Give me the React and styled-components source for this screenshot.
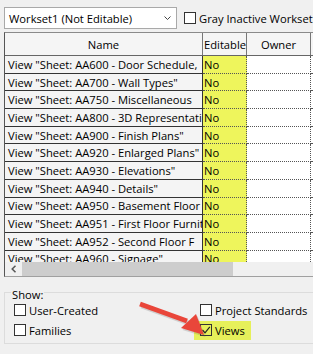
import React from 'react'
import styled, { createGlobalStyle } from 'styled-components'

const names = [
  'View "Sheet: AA600 - Door Schedule,',
  'View "Sheet: AA700 - Wall Types"',
  'View "Sheet: AA750 - Miscellaneous',
  'View "Sheet: AA800 - 3D Representations"',
  'View "Sheet: AA900 - Finish Plans"',
  'View "Sheet: AA920 - Enlarged Plans"',
  'View "Sheet: AA930 - Elevations"',
  'View "Sheet: AA940 - Details"',
  'View "Sheet: AA950 - Basement Floor Furniture"',
  'View "Sheet: AA951 - First Floor Furniture"',
  'View "Sheet: AA952 - Second Floor F',
  'View "Sheet: AA960 - Signage"',
]

const GlobalStyle = createGlobalStyle`
  html, body {
    margin: 0;
    padding: 0;
    background: #f0f0f0;
  }
  body {
    font-family: "Open Sans", "Noto Sans", sans-serif;
    font-size: 11.2px;
    color: #000;
  }
`

const Page = styled.div`
  position: relative;
  width: 313px;
  height: 354px;
  overflow: hidden;
  background: #f0f0f0;
`

const TopBar = styled.div`
  display: flex;
  align-items: center;
  gap: 7px;
  padding: 7px 0 0 4px;
  white-space: nowrap;
`

const Combo = styled.div`
  box-sizing: border-box;
  flex: none;
  display: flex;
  align-items: center;
  justify-content: space-between;
  width: 173px;
  height: 22px;
  padding: 0 5px 0 4px;
  background: #fff;
  border: 1px solid #a9a9a9;
`

const CheckLabel = styled.label`
  flex: none;
  display: flex;
  align-items: center;
  gap: 3px;
  white-space: nowrap;
  height: 19px;
  padding: ${p => (p.$highlight ? '0 6px' : '0')};
  margin-left: ${p => (p.$highlight ? '-6px' : '0')};
  background: ${p => (p.$highlight ? '#e6f05a' : 'transparent')};
  justify-self: start;
`

const Box = styled.span`
  box-sizing: border-box;
  display: inline-flex;
  align-items: center;
  justify-content: center;
  width: 12px;
  height: 12px;
  border: 1px solid #333;
  background: ${p => (p.$filled ? 'transparent' : '#fff')};
`

const Grid = styled.div`
  box-sizing: border-box;
  width: 380px;
  margin: 3px 0 0 4px;
  border-top: 1px solid #8a8a8a;
  border-left: 1px solid #555;
  border-bottom: 1px solid #a0a0a0;
  background: #fff;
`

const cols = '198px 44px 64px 70px'

const HeaderRow = styled.div`
  display: grid;
  grid-template-columns: ${cols};
  height: 22px;
  background: #f5f5f5;
  border-bottom: 1px solid #666;
`

const HeadCell = styled.div`
  display: flex;
  align-items: center;
  justify-content: ${p => (p.$left ? 'flex-start' : 'center')};
  padding-left: ${p => (p.$left ? '1px' : '0')};
  overflow: hidden;
  white-space: nowrap;
  border-right: 1px solid #777;
`

const Body = styled.div`
  height: 206px;
  overflow: hidden;
`

const Row = styled.div`
  display: grid;
  grid-template-columns: ${cols};
  height: 17.7px;
`

const NameCell = styled.div`
  box-sizing: border-box;
  display: flex;
  align-items: center;
  padding-left: 3px;
  overflow: hidden;
  white-space: nowrap;
  background: #f4f4f4;
  border-right: 1px solid #333;
  border-bottom: 1px solid #333;
`

const ValueCell = styled.div`
  box-sizing: border-box;
  display: flex;
  align-items: center;
  padding-left: 1px;
  overflow: hidden;
  white-space: nowrap;
  background: ${p => (p.$yellow ? '#eef55c' : '#fff')};
  border-right: 1px dotted #555;
  border-bottom: 1px dotted #555;
`

const ScrollBar = styled.div`
  display: flex;
  align-items: center;
  height: 14px;
  background: #f0f0f0;
`

const ArrowButton = styled.div`
  display: flex;
  align-items: center;
  justify-content: center;
  width: 17px;
  height: 14px;
`

const Thumb = styled.div`
  width: 211px;
  height: 14px;
  background: #cdcdcd;
`

const Group = styled.fieldset`
  box-sizing: border-box;
  width: 340px;
  margin: 6px 0 0 4px;
  padding: 0 0 3px 6px;
  border: 1px solid #dcdcdc;
`

const Legend = styled.legend`
  padding: 6px 1px 0;
  line-height: 12px;
`

const Options = styled.div`
  display: grid;
  grid-template-columns: 186px auto;
  grid-auto-rows: 20px;
  align-items: center;
  margin-top: -1px;
  padding-left: 3px;
`

function Check({ label, checked, highlight }) {
  return (
    <CheckLabel $highlight={highlight}>
      <Box $filled={highlight}>
        {checked && (
          <svg width="10" height="10" viewBox="0 0 10 10">
            <polyline points="1.5,5 4,7.8 8.8,1.8" fill="none" stroke="#222" strokeWidth="1.2" />
          </svg>
        )}
      </Box>
      {label}
    </CheckLabel>
  )
}

function RedArrow() {
  return (
    <svg
      width="313"
      height="354"
      style={{ position: 'absolute', left: 0, top: 0, pointerEvents: 'none' }}
    >
      <g transform="translate(1.5,2)" opacity="0.2">
        <path d="M140 304 L187 321" stroke="#555" strokeWidth="5" fill="none" />
        <polygon points="181,328 196,314 204,335" fill="#555" />
      </g>
      <path d="M140 304 L187 321" stroke="#e9463a" strokeWidth="5" fill="none" />
      <polygon points="181,328 196,314 204,335" fill="#e9463a" />
    </svg>
  )
}

export default function App() {
  return (
    <Page>
      <GlobalStyle />
      <TopBar>
        <Combo>
          <span>Workset1 (Not Editable)</span>
          <svg width="7" height="4" viewBox="0 0 7 4">
            <polyline points="0.5,0.5 3.5,3.5 6.5,0.5" fill="none" stroke="#444" strokeWidth="1" />
          </svg>
        </Combo>
        <Check label="Gray Inactive Workset Graphics" />
      </TopBar>

      <Grid>
        <HeaderRow>
          <HeadCell>Name</HeadCell>
          <HeadCell $left>Editable</HeadCell>
          <HeadCell>Owner</HeadCell>
          <HeadCell />
        </HeaderRow>
        <Body>
          {names.map(name => (
            <Row key={name}>
              <NameCell>{name}</NameCell>
              <ValueCell $yellow>No</ValueCell>
              <ValueCell />
              <ValueCell />
            </Row>
          ))}
        </Body>
        <ScrollBar>
          <ArrowButton>
            <svg width="6" height="8" viewBox="0 0 6 8">
              <polyline points="4.5,0.8 1.2,4 4.5,7.2" fill="none" stroke="#555" strokeWidth="1.5" />
            </svg>
          </ArrowButton>
          <Thumb />
        </ScrollBar>
      </Grid>

      <Group>
        <Legend>Show:</Legend>
        <Options>
          <Check label="User-Created" />
          <Check label="Project Standards" />
          <Check label="Families" />
          <Check label="Views" checked highlight />
        </Options>
      </Group>

      <RedArrow />
    </Page>
  )
}
